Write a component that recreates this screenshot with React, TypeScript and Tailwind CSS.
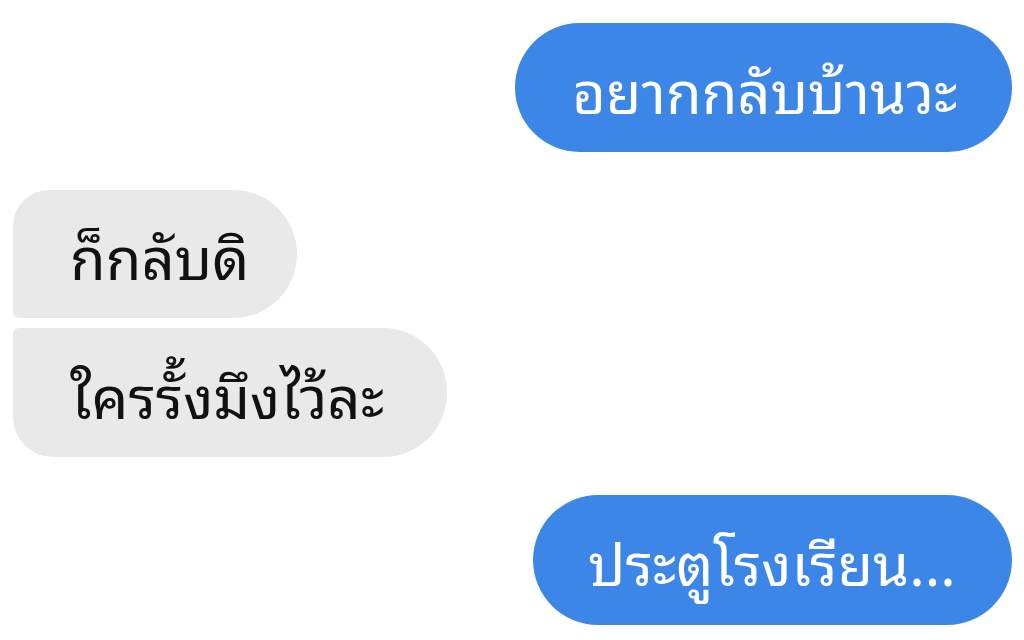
import React from 'react';

const fontStack = { fontFamily: '"Noto Sans Thai Looped", "Noto Sans Thai", Tahoma, "Noto Sans", "DejaVu Sans", sans-serif' };

const ChatScreen: React.FC = () => {
  return (
    <div className="w-[1024px] h-[640px] bg-white overflow-hidden flex flex-col pt-[23px] px-[12px]" style={fontStack}>
      {/* outgoing */}
      <div className="flex justify-end">
        <div className="w-[497px] h-[129px] rounded-full bg-[#3b86e6] flex items-center pl-[57px] text-white text-[58px] leading-none">
          อยากกลับบ้านวะ
        </div>
      </div>

      {/* incoming group */}
      <div className="flex flex-col items-start gap-[10px] mt-[38px] pl-[1px]">
        <div className="w-[284px] h-[128px] bg-[#e9e9e9] rounded-tl-[36px] rounded-bl-[6px] rounded-r-[64px] flex items-center pl-[57px] text-[#111111] text-[58px] leading-none">
          ก็กลับดิ
        </div>
        <div className="w-[434px] h-[129px] bg-[#e9e9e9] rounded-tl-[6px] rounded-bl-[40px] rounded-r-[64px] flex items-center pl-[57px] text-[#111111] text-[58px] leading-none">
          ใครรั้งมึงไว้ละ
        </div>
      </div>

      {/* outgoing */}
      <div className="flex justify-end mt-[38px]">
        <div className="w-[479px] h-[130px] rounded-full bg-[#3b86e6] flex items-center pl-[55px] text-white text-[58px] leading-none">
          ประตูโรงเรียน...
        </div>
      </div>
    </div>
  );
};

export default function App() {
  return <ChatScreen />;
}
